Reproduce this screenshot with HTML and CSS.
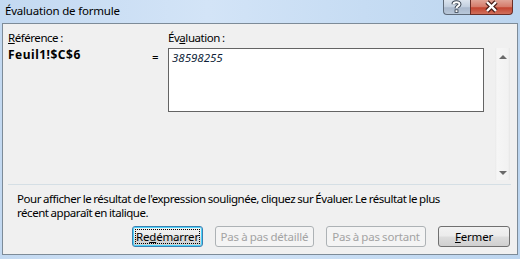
FILE: index.html
```html
<!DOCTYPE html>
<html lang="fr">
<head>
    <meta charset="UTF-8">
    <title>Évaluation de formule</title>
    <link rel="stylesheet" href="styles.css">
</head>
<body>
<div class="window">
    <div class="titlebar">
        <span class="title">Évaluation de formule</span>
        <div class="caption">
            <span class="cap-btn help">
                <svg width="27" height="15" viewBox="0 0 27 15">
                    <path d="M10.5 5.2 C10.5 2.6 16.5 2.4 16.5 5.2 C16.5 7.2 13.5 7 13.5 9.2" fill="none" stroke="#3b4654" stroke-width="4"/>
                    <rect x="11.6" y="10.4" width="3.8" height="3.4" fill="#3b4654"/>
                    <path d="M10.5 5.2 C10.5 2.6 16.5 2.4 16.5 5.2 C16.5 7.2 13.5 7 13.5 9.2" fill="none" stroke="#fff" stroke-width="2"/>
                    <rect x="12.5" y="11.2" width="2" height="1.8" fill="#fff"/>
                </svg>
            </span>
            <span class="cap-btn close">
                <svg width="43" height="15" viewBox="0 0 43 15">
                    <path d="M17 3 L26 12 M26 3 L17 12" stroke="#4a1f1a" stroke-width="4.6"/>
                    <path d="M17 3 L26 12 M26 3 L17 12" stroke="#fff" stroke-width="2.4"/>
                </svg>
            </span>
        </div>
    </div>

    <div class="client">
        <div class="eval-area">
            <div class="lbl"><u>R</u>éférence :</div>
            <div></div>
            <div class="lbl">Év<u>a</u>luation :</div>
            <div></div>
            <div></div>
            <div class="ref">Feuil1!$C$6</div>
            <div class="eq">=</div>
            <div class="box"><i>38598255</i></div>
            <div></div>
            <div class="scrollbar">
                <span class="arrow up"></span>
                <span class="arrow down"></span>
            </div>
        </div>

        <div class="sep"></div>

        <p class="hint">Pour afficher le résultat de l'expression soulignée, cliquez sur Évaluer. Le résultat le plus récent apparaît en italique.</p>

        <div class="buttons">
            <span class="btn default w1"><span class="focus">Re<u>d</u>émarrer</span></span>
            <span class="btn disabled w2">Pas à pas détaillé</span>
            <span class="btn disabled w3">Pas à pas sortant</span>
            <span class="btn w4"><u>F</u>ermer</span>
        </div>
    </div>
</div>
</body>
</html>
```
FILE: styles.css
```css
*{
    padding: 0;
    margin: 0;
    box-sizing: border-box;
}
body{
    width: 520px;
    height: 259px;
    overflow: hidden;
    font: 11.5px/15px "Noto Sans", "DejaVu Sans", sans-serif;
    letter-spacing: -0.45px;
    word-spacing: -0.5px;
    color: #000;
}
.window{
    width: 520px;
    height: 259px;
    display: flex;
    flex-direction: column;
    background: linear-gradient(90deg, #c3d9f1 0%, #d3e4f7 40%, #c6dcf3 70%, #bcd5ef 100%);
}
.titlebar{
    height: 23px;
    display: flex;
    align-items: flex-start;
}
.title{
    margin: 3px 0 0 5px;
    line-height: 15px;
    letter-spacing: -0.2px;
    word-spacing: 0;
    color: #000;
}
.caption{
    margin-left: auto;
    margin-right: 7px;
    display: flex;
}
.cap-btn{
    display: block;
    height: 15px;
    border: 1px solid #5e6a78;
    border-top: none;
}
.cap-btn svg{
    display: block;
    margin: -1px 0 0 -1px;
}
.help{
    width: 27px;
    border-radius: 0 0 0 4px;
    border-right: none;
    background: linear-gradient(#dbe4ee 0%, #c2cfdf 50%, #a9b8cc 55%, #b9c8da 100%);
}
.close{
    width: 43px;
    border-radius: 0 0 4px 0;
    border-color: #6b2e27;
    background: linear-gradient(#e0a497 0%, #d57a69 50%, #c3432f 55%, #d0705c 100%);
}

.client{
    flex: 1;
    margin: 0 2px 4px 2px;
    border: 1px solid #7d8b98;
    background: #f0f0f0;
    padding: 6px 0 0 5px;
}

.eval-area{
    display: grid;
    grid-template-columns: 144px 16px 316px 11px 15px;
    grid-template-rows: 18px 132px;
}
.ref{
    font-size: 12px;
    font-weight: bold;
    letter-spacing: 0.5px;
    margin-top: -1px;
}
.eq{
    margin-top: 1px;
}
.box{
    height: 64px;
    border: 1px solid #646464;
    background: #fff;
    padding: 1px 0 0 3px;
    color: #0f1f3a;
    letter-spacing: 0;
}
.scrollbar{
    position: relative;
    background: linear-gradient(90deg, #e9e9e9 0, #f6f6f6 2px, #f2f2f2 13px, #e6e6e6 15px);
}
.arrow{
    position: absolute;
    left: 4px;
    width: 0;
    height: 0;
    border-left: 4px solid transparent;
    border-right: 4px solid transparent;
}
.arrow.up{
    top: 7px;
    border-bottom: 4px solid #6a6a6a;
}
.arrow.down{
    bottom: 5px;
    border-top: 4px solid #6a6a6a;
}

.sep{
    width: 503px;
    height: 1px;
    margin-top: 4px;
    background: #d5dfe5;
}

.hint{
    margin: 7px 0 0 9px;
    width: 430px;
    line-height: 14px;
}

.buttons{
    display: flex;
    gap: 12px;
    margin: 6px 0 0 124px;
}
.btn{
    height: 21px;
    display: flex;
    align-items: center;
    justify-content: center;
    border: 1px solid #707070;
    border-radius: 3px;
    background: linear-gradient(#f2f2f2 0%, #ebebeb 48%, #dddddd 52%, #cfcfcf 100%);
    white-space: nowrap;
    letter-spacing: -0.2px;
}
.btn.default{
    border-color: #3c7fb1;
    box-shadow: inset 0 0 0 1px #4bd3fb;
}
.focus{
    width: calc(100% - 6px);
    height: 13px;
    line-height: 13px;
    text-align: center;
    outline: 1px dotted #000;
}
.btn.disabled{
    border-color: #adb2b5;
    background: #f4f4f4;
    color: #a3a3a3;
}
.w1{ width: 71px; }
.w2{ width: 99px; }
.w3{ width: 100px; }
.w4{ width: 72px; }
```
